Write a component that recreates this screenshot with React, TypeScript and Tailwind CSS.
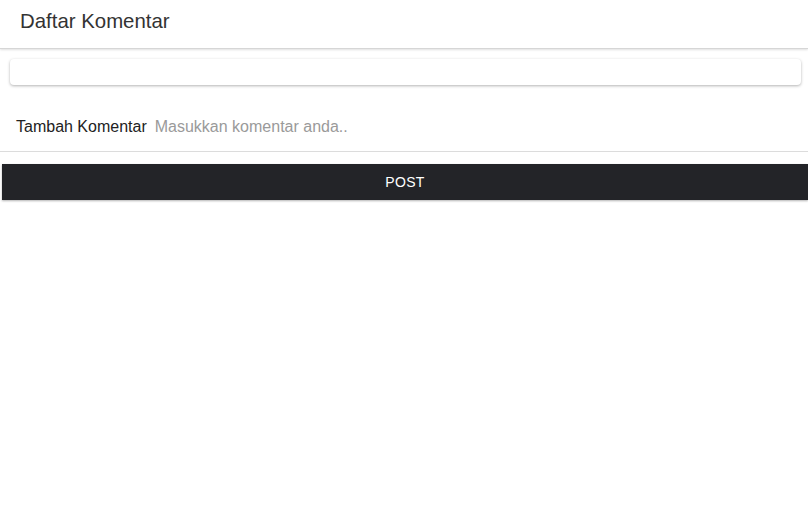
import React from "react";

export default function App() {
  return (
    <div className="min-h-[514px] bg-white font-['Liberation_Sans',Arial,sans-serif]">
      {/* Header */}
      <div className="h-[49px] flex items-center pb-[6px] px-5 border-b border-[#d6d6d6] shadow-[0_1px_2px_rgba(0,0,0,0.12)]">
        <h1 className="text-[20.4px] text-[#333] font-normal">Daftar Komentar</h1>
      </div>

      {/* Comment list card */}
      <div className="ml-[10px] mr-[7px] mt-[10px] h-[26px] rounded bg-white shadow-[0_1px_3px_rgba(0,0,0,0.3)]" />

      {/* Input row */}
      <div className="mt-[18px] h-[49px] flex items-center pl-4 border-b border-[#dcdcdc]">
        <label className="text-[16px] text-[#222] mr-2">Tambah Komentar</label>
        <input
          className="flex-1 text-[16px] text-[#333] outline-none placeholder:text-[#9a9a9a]"
          placeholder="Masukkan komentar anda.."
        />
      </div>

      {/* Post button */}
      <div className="mt-3 ml-[2px]">
        <button className="w-full h-9 bg-[#232428] text-white text-[14px] tracking-wide shadow-[0_1px_2px_rgba(0,0,0,0.3)]">
          POST
        </button>
      </div>
    </div>
  );
}
